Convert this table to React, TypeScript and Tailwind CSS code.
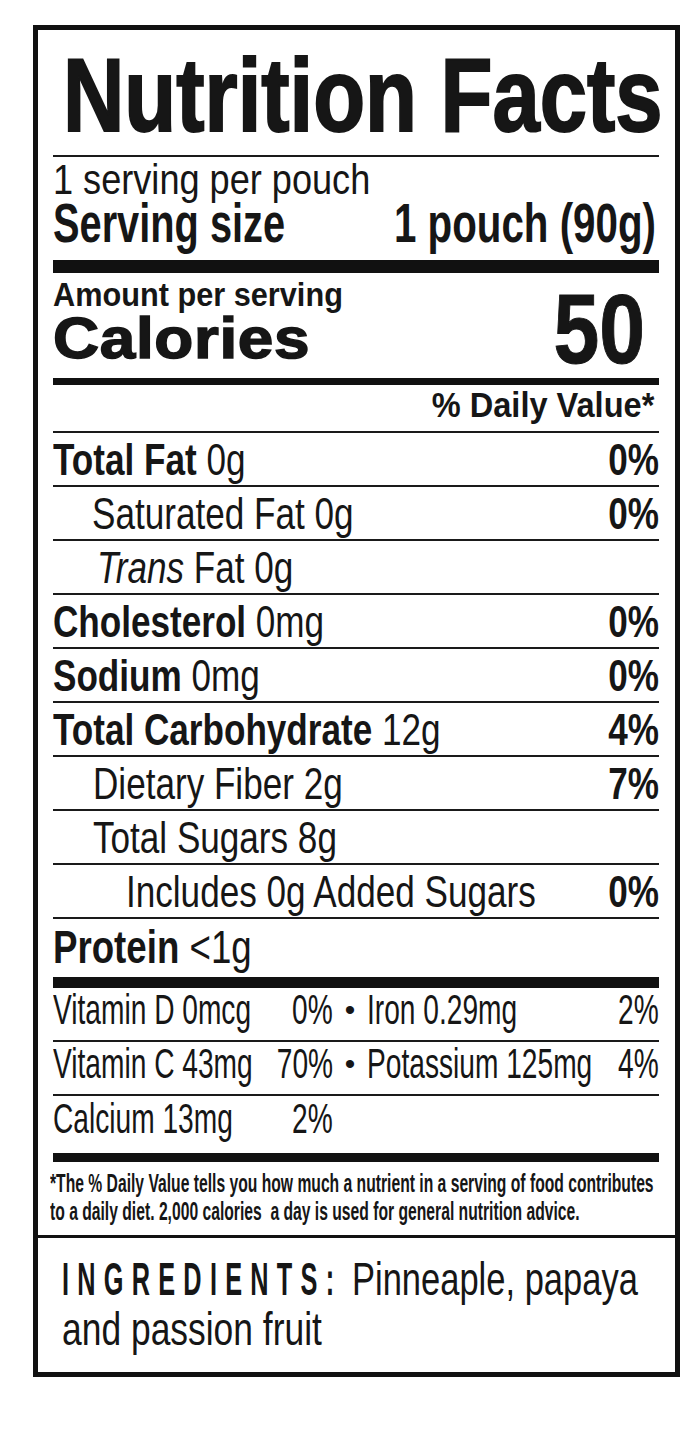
import type { ReactNode } from "react";

const font = "font-['Liberation_Sans','Arial',sans-serif]";

// squeezed text: the label uses a condensed face, so we narrow Liberation Sans
const S = ({
  sx,
  right = false,
  className = "",
  children,
}: {
  sx: string;
  right?: boolean;
  className?: string;
  children: ReactNode;
}) => (
  <span
    className={`inline-block whitespace-nowrap ${right ? "origin-right" : "origin-left"} ${sx} ${className}`}
  >
    {children}
  </span>
);

const Row = ({
  children,
  pct,
  indent = "pl-0",
}: {
  children: ReactNode;
  pct?: string;
  indent?: string;
}) => {
  return (
    <div className="flex h-[54px] items-end border-b-2 border-[#1a1a1a] pb-[3px] text-[45px] leading-none">
      <div className={`min-w-0 flex-1 ${indent}`}>
        <S sx="scale-x-[0.78]">{children}</S>
      </div>
      {pct && (
        <div className="shrink-0 font-bold">
          <S sx="scale-x-[0.78]" right>
            {pct}
          </S>
        </div>
      )}
    </div>
  );
};

const VitRow = ({
  a,
  ap,
  b,
  bp,
  height,
  pb,
  line = true,
}: {
  a: string;
  ap: string;
  b?: string;
  bp?: string;
  height: string;
  pb: string;
  line?: boolean;
}) => {
  return (
    <div
      className={`flex items-end text-[42px] leading-none ${height} ${pb} ${
        line ? "border-b-2 border-[#1a1a1a]" : ""
      }`}
    >
      <div className="flex w-[280px] shrink-0">
        <div className="min-w-0 flex-1">
          <S sx="scale-x-[0.67]">{a}</S>
        </div>
        <div className="shrink-0">
          <S sx="scale-x-[0.67]" right>
            {ap}
          </S>
        </div>
      </div>
      <div className="w-[34px] shrink-0 text-center text-[30px] leading-[42px]">{b ? "•" : ""}</div>
      <div className="flex min-w-0 flex-1">
        <div className="min-w-0 flex-1">{b && <S sx="scale-x-[0.67]">{b}</S>}</div>
        <div className="shrink-0">
          {bp && (
            <S sx="scale-x-[0.67]" right>
              {bp}
            </S>
          )}
        </div>
      </div>
    </div>
  );
};

const App = () => {
  return (
    <div className={`min-h-screen bg-white pl-[33px] pt-[25px] text-[#161616] ${font}`}>
      <div className="w-[647px] overflow-hidden border-[5px] border-[#111]">
        <div className="pl-[15px] pr-[16px]">
          {/* title */}
          <div className="h-[127px] border-b-2 border-[#1a1a1a] pl-[10px] pt-[14px]">
            <div className="text-[103px] font-bold leading-none">
              <S sx="scale-x-[0.825]" className="[-webkit-text-stroke:2px_#161616]">
                Nutrition Facts
              </S>
            </div>
          </div>

          {/* serving */}
          <div className="h-[103px] pt-[5px]">
            <div className="text-[42px] leading-[36px]">
              <S sx="scale-x-[0.86]">1 serving per pouch</S>
            </div>
            <div className="mt-[2px] flex text-[56px] font-bold leading-[46px]">
              <div className="min-w-0 flex-1">
                <S sx="scale-x-[0.71]">Serving size</S>
              </div>
              <div className="shrink-0 pr-[3px]">
                <S sx="scale-x-[0.72]" right>
                  1 pouch (90g)
                </S>
              </div>
            </div>
          </div>
          <div className="h-[13px] bg-[#111]" />

          {/* calories */}
          <div className="flex h-[105px]">
            <div className="min-w-0 flex-1 pt-[7px]">
              <div className="text-[33px] font-bold leading-[30px]">
                <S sx="scale-x-[0.93]">Amount per serving</S>
              </div>
              <div className="mt-[4px] text-[57px] font-bold leading-[48px]">
                <S sx="scale-x-[1.12]" className="tracking-[0.01em] [-webkit-text-stroke:1.5px_#161616]">
                  Calories
                </S>
              </div>
            </div>
            <div className="shrink-0 pr-[14px] pt-[7px] text-[98px] font-bold leading-none">
              <S sx="scale-x-[0.84]" right className="[-webkit-text-stroke:1px_#161616]">
                50
              </S>
            </div>
          </div>
          <div className="h-[7px] bg-[#111]" />

          <div className="flex h-[48px] justify-end border-b-2 border-[#1a1a1a] pr-[5px] pt-[2px] text-[35px] font-bold leading-none">
            <S sx="scale-x-[0.93]" right>
              % Daily Value*
            </S>
          </div>

          <Row pct="0%">
            <b>Total Fat</b> 0g
          </Row>
          <Row pct="0%" indent="pl-[39px]">
            Saturated Fat 0g
          </Row>
          <Row indent="pl-[44px]">
            <i>Trans</i> Fat 0g
          </Row>
          <Row pct="0%">
            <b>Cholesterol</b> 0mg
          </Row>
          <Row pct="0%">
            <b>Sodium</b> 0mg
          </Row>
          <Row pct="4%">
            <b>Total Carbohydrate</b> 12g
          </Row>
          <Row pct="7%" indent="pl-[40px]">
            Dietary Fiber 2g
          </Row>
          <Row indent="pl-[40px]">Total Sugars 8g</Row>
          <Row pct="0%" indent="pl-[73px]">
            Includes 0g Added Sugars
          </Row>
          <div className="flex h-[58px] items-end pb-[7px] text-[47px] leading-none">
            <S sx="scale-x-[0.78]">
              <b>Protein</b> &lt;1g
            </S>
          </div>
          <div className="h-[11px] bg-[#111]" />

          <VitRow a="Vitamin D 0mcg" ap="0%" b="Iron 0.29mg" bp="2%" height="h-[54px]" pb="pb-[9px]" />
          <VitRow a="Vitamin C 43mg" ap="70%" b="Potassium 125mg" bp="4%" height="h-[54px]" pb="pb-[9px]" />
          <VitRow a="Calcium 13mg" ap="2%" height="h-[57px]" pb="pb-[13px]" line={false} />
          <div className="h-[9px] bg-[#111]" />

          <div className="-ml-[3px] h-[73px] pt-[7px] text-[25px] font-bold leading-[28px]">
            <div>
              <S sx="scale-x-[0.627]">
                *The % Daily Value tells you how much a nutrient in a serving of food contributes
              </S>
            </div>
            <div>
              <S sx="scale-x-[0.627]">to a daily diet. 2,000 calories&nbsp; a day is used for general nutrition advice.</S>
            </div>
          </div>
        </div>

        {/* ingredients */}
        <div className="h-[137px] border-t-[3px] border-[#111] pl-[24px] pt-[16px] text-[46px] leading-[50px]">
          <div className="flex">
            <div className="w-[290px] shrink-0 font-bold">
              <S sx="scale-x-[0.55]" className="tracking-[15px]">
                INGREDIENTS:
              </S>
            </div>
            <S sx="scale-x-[0.75]">Pinneaple, papaya</S>
          </div>
          <div>
            <S sx="scale-x-[0.77]">and passion fruit</S>
          </div>
        </div>
      </div>
    </div>
  );
};

export default App;
